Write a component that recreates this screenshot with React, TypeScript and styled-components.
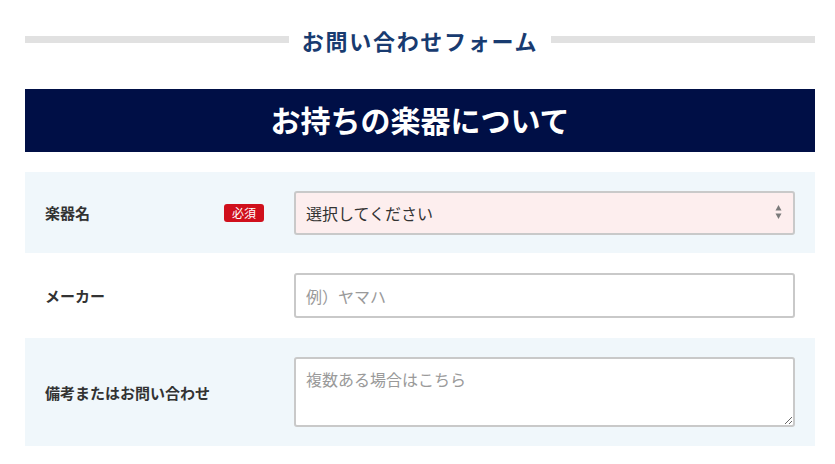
import React from "react";
import styled, { createGlobalStyle } from "styled-components";

const Global = createGlobalStyle`
  html, body { margin: 0; padding: 0; background: #fff; }
  body { font-family: "Noto Sans CJK JP", "Noto Sans", sans-serif; color: #333; }
  * { box-sizing: border-box; }
`;

const Page = styled.div`
  padding: 24px 20px 0 25px;
`;

const TitleRow = styled.div`
  display: flex;
  align-items: center;
  gap: 13px;
  height: 32px;
  margin-bottom: 33px;
`;

const Rule = styled.span`
  flex: 1;
  height: 7px;
  background: #e1e1e1;
  margin-top: -2px;
`;

const Title = styled.h2`
  margin: 0;
  font-size: 22px;
  line-height: 32px;
  font-weight: 700;
  letter-spacing: 1.7px;
  color: #183b70;
`;

const Banner = styled.h3`
  margin: 0 0 20px;
  height: 63px;
  line-height: 61px;
  text-align: center;
  background: #000f46;
  color: #fff;
  font-size: 30px;
  font-weight: 700;
`;

const Row = styled.div<{ $tinted?: boolean; $py?: number }>`
  display: grid;
  grid-template-columns: 219px 1fr;
  column-gap: 30px;
  align-items: center;
  padding: ${(p) => p.$py ?? 19}px 20px;
  background: ${(p) => (p.$tinted ? "#f0f7fb" : "#fff")};
`;

const LabelCell = styled.div`
  display: flex;
  align-items: center;
  justify-content: space-between;
`;

const Label = styled.span`
  font-size: 15px;
  font-weight: 700;
  color: #333;
`;

const Badge = styled.span`
  display: inline-flex;
  align-items: center;
  justify-content: center;
  width: 40px;
  height: 18px;
  border-radius: 3px;
  background: #d0101c;
  color: #fff;
  font-size: 12px;
  line-height: 1;
`;

const fieldBase = `
  width: 100%;
  border: 2px solid #c9c9c9;
  border-radius: 3px;
  font-family: "Noto Sans CJK JP", "Noto Sans", sans-serif;
  font-size: 16px;
  color: #333;
  padding: 0 10px;
  outline: none;
  &::placeholder { color: #9a9a9a; }
`;

const SelectWrap = styled.div`
  position: relative;
`;

const Select = styled.select`
  ${fieldBase}
  height: 44px;
  appearance: none;
  -webkit-appearance: none;
  background: #fdeeee;
`;

const Arrows = styled.svg`
  position: absolute;
  right: 13px;
  top: 13px;
  pointer-events: none;
`;

const Input = styled.input`
  ${fieldBase}
  height: 45px;
  background: #fff;
`;

const TextArea = styled.textarea`
  ${fieldBase}
  display: block;
  height: 70px;
  padding: 8px 10px;
  line-height: 24px;
  background: #fff;
`;

export default function App() {
  return (
    <>
      <Global />
      <Page>
        <TitleRow>
          <Rule />
          <Title>お問い合わせフォーム</Title>
          <Rule />
        </TitleRow>
        <Banner>お持ちの楽器について</Banner>
        <Row $tinted $py={18.5}>
          <LabelCell>
            <Label>楽器名</Label>
            <Badge>必須</Badge>
          </LabelCell>
          <SelectWrap>
            <Select defaultValue="">
              <option value="">選択してください</option>
            </Select>
            <Arrows width="7" height="16" viewBox="0 0 7 16">
              <path d="M3.5 1 L6.5 6.5 L0.5 6.5 Z" fill="#7a7a7a" />
              <path d="M3.5 15 L6.5 9.5 L0.5 9.5 Z" fill="#7a7a7a" />
            </Arrows>
          </SelectWrap>
        </Row>
        <Row $py={20}>
          <LabelCell>
            <Label>メーカー</Label>
          </LabelCell>
          <Input placeholder="例）ヤマハ" />
        </Row>
        <Row $tinted $py={19}>
          <LabelCell>
            <Label>備考またはお問い合わせ</Label>
          </LabelCell>
          <TextArea placeholder="複数ある場合はこちら" />
        </Row>
      </Page>
    </>
  );
}
